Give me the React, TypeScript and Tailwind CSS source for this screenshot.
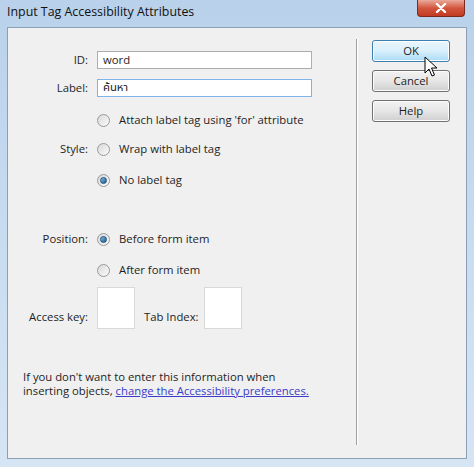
import React from 'react';

const font = { fontFamily: '"Open Sans", "Noto Sans", sans-serif' };

function Radio({ checked }: { checked?: boolean }) {
  return (
    <span className="relative flex h-[13px] w-[13px] items-center justify-center rounded-full border border-[#9a9a9a] bg-gradient-to-br from-[#d8d8d8] to-[#fbfbfb]">
      {checked && (
        <span className="h-[7px] w-[7px] rounded-full border border-[#1b4f7a] bg-gradient-to-br from-[#7fc0ea] to-[#1d5c8c]" />
      )}
    </span>
  );
}

function RadioRow({ label, checked, side }: { label: string; checked?: boolean; side?: string }) {
  return (
    <div className="flex h-[20px] items-center">
      <span className="w-[88px] pr-[8px] text-right">{side}</span>
      <span className="ml-[1px]">
        <Radio checked={checked} />
      </span>
      <span className="ml-[9px]">{label}</span>
    </div>
  );
}

function Btn({ label, hot }: { label: string; hot?: boolean }) {
  return (
    <div
      className={
        hot
          ? 'flex h-[22px] w-[78px] items-center justify-center rounded-[3px] border border-[#3c7fb1] bg-gradient-to-b from-[#eaf6fd] via-[#d9f0fc] to-[#a9dbf6] shadow-[inset_0_0_0_1px_#fff]'
          : 'flex h-[22px] w-[78px] items-center justify-center rounded-[3px] border border-[#707070] bg-gradient-to-b from-[#f2f2f2] via-[#e6e6e6] to-[#cfcfcf] shadow-[inset_0_0_0_1px_#fcfcfc]'
      }
    >
      {label}
    </div>
  );
}

export default function App() {
  return (
    <div
      className="relative flex h-[467px] w-[474px] flex-col bg-gradient-to-b from-[#b9d1ea] via-[#c8dcf0] to-[#d6e5f4] text-[11.3px] text-[#1e1e1e]"
      style={font}
    >
      {/* Title bar */}
      <div className="flex h-[27px] items-start">
        <span className="ml-[7px] mt-[3px] text-[12.4px] text-[#111]">Input Tag Accessibility Attributes</span>
        <div className="ml-auto mr-[9px] flex h-[17px] w-[48px] items-center justify-center rounded-b-[4px] border border-t-0 border-[#7a2a1e] bg-gradient-to-b from-[#e9a99a] via-[#d2553e] to-[#c23a22]">
          <svg width="12" height="10" viewBox="0 0 12 10">
            <path d="M2 1 L10 9 M10 1 L2 9" stroke="#fff" strokeWidth="2.4" strokeLinecap="round" />
          </svg>
        </div>
      </div>

      {/* Client area */}
      <div className="mx-[7px] mb-[8px] flex flex-1 border border-[#8d9fb5] bg-[#f0f0f0]">
        <div className="flex w-[348px] flex-col">
          <div className="mt-[23px] flex h-[18px] items-center">
            <span className="w-[80px] text-right">ID:</span>
            <div className="ml-[9px] flex h-[18px] w-[215px] items-center border border-[#abadb3] bg-white pl-[5px]">word</div>
          </div>
          <div className="mt-[10px] flex h-[18px] items-center">
            <span className="w-[80px] text-right">Label:</span>
            <div
              className="ml-[9px] flex h-[18px] w-[215px] items-center border border-[#7eb4ea] bg-white pl-[5px]"
              style={{ fontFamily: '"Noto Sans Thai", "Tahoma", "DejaVu Sans", sans-serif' }}
            >
              ค้นหา
            </div>
          </div>

          <div className="mt-[13px]">
            <RadioRow label="Attach label tag using 'for' attribute" />
          </div>
          <div className="mt-[9px]">
            <RadioRow side="Style:" label="Wrap with label tag" />
          </div>
          <div className="mt-[11px]">
            <RadioRow label="No label tag" checked />
          </div>

          <div className="mt-[39px]">
            <RadioRow side="Position:" label="Before form item" checked />
          </div>
          <div className="mt-[11px]">
            <RadioRow label="After form item" />
          </div>

          <div className="mt-[7px] flex h-[42px]">
            <span className="mt-[22px] w-[80px] text-right">Access key:</span>
            <div className="ml-[9px] h-[42px] w-[38px] border border-[#d9d9d9] bg-white" />
            <span className="ml-[9px] mt-[22px]">Tab Index:</span>
            <div className="ml-[5px] h-[42px] w-[38px] border border-[#d9d9d9] bg-white" />
          </div>

          <p className="ml-[15px] mt-[41px] leading-[14px]">
            If you don't want to enter this information when
            <br />
            inserting objects,{' '}
            <span className="text-[#3b3bc8] underline">change the Accessibility preferences.</span>
          </p>
        </div>

        {/* Separator */}
        <div className="mt-[11px] mb-[13px] w-[2px] border-l border-[#a0a0a0] bg-white" />

        {/* Buttons */}
        <div className="ml-[14px] mt-[12px] flex flex-col gap-[8px]">
          <Btn label="OK" hot />
          <Btn label="Cancel" />
          <Btn label="Help" />
        </div>
      </div>

      {/* Mouse cursor */}
      <svg className="absolute left-[424px] top-[56px]" width="14" height="22" viewBox="0 0 14 22">
        <path d="M1 1 L1 17 L5 13 L8 20 L10.5 19 L7.5 12 L13 12 Z" fill="#fff" stroke="#000" strokeWidth="1" strokeLinejoin="round" />
      </svg>
    </div>
  );
}
